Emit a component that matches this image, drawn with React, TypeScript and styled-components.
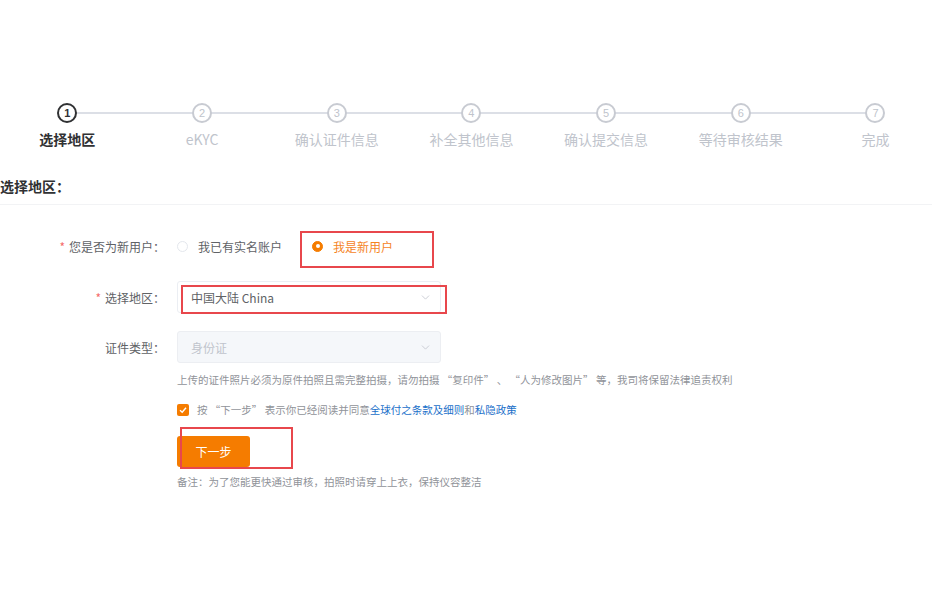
import React from 'react'
import styled, { createGlobalStyle } from 'styled-components'
import { ChevronDown } from 'lucide-react'

const GlobalStyle = createGlobalStyle`
  html, body {
    margin: 0;
    padding: 0;
    background: #fff;
    overflow: hidden;
  }
  body {
    font-family: "Noto Sans CJK SC", "Noto Sans", sans-serif;
    color: #303133;
  }
`

const Page = styled.div`
  width: 932px;
  height: 591px;
  padding-top: 103px;
  box-sizing: border-box;
`

const Steps = styled.div`
  display: grid;
  grid-template-columns: repeat(7, 134.7px);
  width: 943px;
`

const Step = styled.div`
  position: relative;
  display: flex;
  flex-direction: column;
  align-items: center;
`

const StepHead = styled.div<{ $first: boolean; $last: boolean }>`
  position: relative;
  width: 100%;
  height: 20px;
  display: flex;
  justify-content: center;

  &::before,
  &::after {
    content: '';
    position: absolute;
    top: 9px;
    height: 2px;
    background: #dcdfe6;
  }
  &::before {
    left: 0;
    right: 50%;
    display: ${p => (p.$first ? 'none' : 'block')};
  }
  &::after {
    left: 50%;
    right: 0;
    display: ${p => (p.$last ? 'none' : 'block')};
  }
`

const StepIcon = styled.div<{ $active: boolean }>`
  position: relative;
  z-index: 1;
  width: 20px;
  height: 20px;
  box-sizing: border-box;
  border-radius: 50%;
  background: #fff;
  border: 2px solid ${p => (p.$active ? '#303133' : '#c8cbd2')};
  color: ${p => (p.$active ? '#303133' : '#c0c4cc')};
  font-size: 11px;
  font-weight: ${p => (p.$active ? 700 : 400)};
  display: flex;
  align-items: center;
  justify-content: center;
  line-height: 1;
  font-family: "Liberation Sans", sans-serif;
`

const StepTitle = styled.div<{ $active: boolean }>`
  margin-top: 8px;
  font-size: 14px;
  line-height: 16px;
  font-weight: ${p => (p.$active ? 700 : 400)};
  color: ${p => (p.$active ? '#303133' : '#c0c4cc')};
  white-space: nowrap;
`

const SectionTitle = styled.div`
  margin-top: 30px;
  font-size: 14px;
  line-height: 18px;
  font-weight: 700;
  padding-bottom: 9px;
  border-bottom: 1px solid #f2f3f5;
`

const Form = styled.div`
  margin-top: 25px;
  display: flex;
  flex-direction: column;
`

const Row = styled.div<{ $mt?: number }>`
  display: flex;
  align-items: center;
  height: 32px;
  margin-top: ${p => p.$mt ?? 0}px;
`

const Label = styled.div<{ $required?: boolean }>`
  width: 165px;
  padding-right: 12px;
  box-sizing: content-box;
  text-align: right;
  font-size: 12px;
  color: #606266;
  white-space: nowrap;

  &::before {
    content: '*';
    color: #f56c6c;
    margin-right: 4px;
    display: ${p => (p.$required ? 'inline' : 'none')};
  }
`

const Control = styled.div`
  display: flex;
  align-items: center;
  position: relative;
`

const Radio = styled.label<{ $checked?: boolean }>`
  position: relative;
  display: flex;
  align-items: center;
  gap: 10px;
  font-size: 12px;
  color: ${p => (p.$checked ? '#f5841f' : '#606266')};
  margin-right: 30px;
  white-space: nowrap;
`

const RadioDot = styled.span<{ $checked?: boolean }>`
  width: 11px;
  height: 11px;
  box-sizing: border-box;
  border-radius: 50%;
  border: 1px solid ${p => (p.$checked ? '#f57c00' : '#e4e7ed')};
  background: ${p => (p.$checked ? '#f57c00' : '#fff')};
  display: flex;
  align-items: center;
  justify-content: center;

  &::after {
    content: '';
    width: 4px;
    height: 4px;
    border-radius: 50%;
    background: #fff;
    display: ${p => (p.$checked ? 'block' : 'none')};
  }
`

const Mark = styled.div<{ $top: number; $left: number; $w: number; $h: number }>`
  position: absolute;
  top: ${p => p.$top}px;
  left: ${p => p.$left}px;
  width: ${p => p.$w}px;
  height: ${p => p.$h}px;
  border: 2px solid #e8474c;
  box-sizing: border-box;
  pointer-events: none;
`

const Select = styled.div<{ $disabled?: boolean }>`
  width: 264px;
  height: 32px;
  box-sizing: border-box;
  border: 1px solid ${p => (p.$disabled ? '#eceef2' : '#ebeef3')};
  border-radius: 3px;
  background: ${p => (p.$disabled ? '#f5f7fa' : '#fff')};
  display: flex;
  align-items: center;
  justify-content: space-between;
  padding: 0 8px 0 13px;
  font-size: 12px;
  color: ${p => (p.$disabled ? '#c0c4cc' : '#606266')};
`

const Indent = styled.div`
  padding-left: 177px;
`

const Hint = styled.div`
  margin-top: 10px;
  font-size: 10.5px;
  line-height: 14px;
  color: #909399;
  white-space: nowrap;
`

const Agree = styled.div`
  margin-top: 16px;
  display: flex;
  align-items: center;
  gap: 8px;
  font-size: 10.5px;
  line-height: 14px;
  color: #909399;
  white-space: nowrap;
`

const Check = styled.span`
  width: 12px;
  height: 12px;
  border-radius: 2px;
  background: #f57c00;
  display: flex;
  align-items: center;
  justify-content: center;
`

const Link = styled.span`
  color: #1a6fc9;
`

const ButtonWrap = styled.div`
  position: relative;
  margin-top: 19px;
  height: 31px;
`

const Button = styled.button`
  width: 73px;
  height: 31px;
  border: none;
  border-radius: 3px;
  background: #f57c00;
  color: #fff;
  font-size: 12px;
  font-family: inherit;
  padding: 0;
`

const Note = styled.div`
  margin-top: 8px;
  font-size: 10.5px;
  line-height: 14px;
  color: #909399;
`

const steps = ['选择地区', 'eKYC', '确认证件信息', '补全其他信息', '确认提交信息', '等待审核结果', '完成']

export default function App() {
  return (
    <>
      <GlobalStyle />
      <Page>
        <Steps>
          {steps.map((s, i) => (
            <Step key={s}>
              <StepHead $first={i === 0} $last={i === steps.length - 1}>
                <StepIcon $active={i === 0}>{i + 1}</StepIcon>
              </StepHead>
              <StepTitle $active={i === 0}>{s}</StepTitle>
            </Step>
          ))}
        </Steps>

        <SectionTitle>选择地区：</SectionTitle>

        <Form>
          <Row>
            <Label $required>您是否为新用户：</Label>
            <Control>
              <Radio>
                <RadioDot />
                我已有实名账户
              </Radio>
              <Radio $checked>
                <RadioDot $checked />
                我是新用户
                <Mark $top={-7} $left={-12} $w={134} $h={37} />
              </Radio>
            </Control>
          </Row>

          <Row $mt={19}>
            <Label $required>选择地区：</Label>
            <Control>
              <Select>
                中国大陆 China
                <ChevronDown size={13} color="#c0c4cc" strokeWidth={1.5} />
              </Select>
              <Mark $top={4} $left={4} $w={266} $h={29} />
            </Control>
          </Row>

          <Row $mt={18}>
            <Label>证件类型：</Label>
            <Control>
              <Select $disabled>
                身份证
                <ChevronDown size={13} color="#c0c4cc" strokeWidth={1.5} />
              </Select>
            </Control>
          </Row>

          <Indent>
            <Hint>
              上传的证件照片必须为原件拍照且需完整拍摄，请勿拍摄 “复印件” 、 “人为修改图片” 等，我司将保留法律追责权利
            </Hint>
            <Agree>
              <Check>
                <svg width="8" height="8" viewBox="0 0 8 8">
                  <path d="M1 4.2 L3.2 6.2 L7 1.8" fill="none" stroke="#fff" strokeWidth="1.4" />
                </svg>
              </Check>
              <span>
                按 “下一步” 表示你已经阅读并同意<Link>全球付之条款及细则</Link>和<Link>私隐政策</Link>
              </span>
            </Agree>
            <ButtonWrap>
              <Button>下一步</Button>
              <Mark $top={-9} $left={3} $w={113} $h={42} />
            </ButtonWrap>
            <Note>备注：为了您能更快通过审核，拍照时请穿上上衣，保持仪容整洁</Note>
          </Indent>
        </Form>
      </Page>
    </>
  )
}
